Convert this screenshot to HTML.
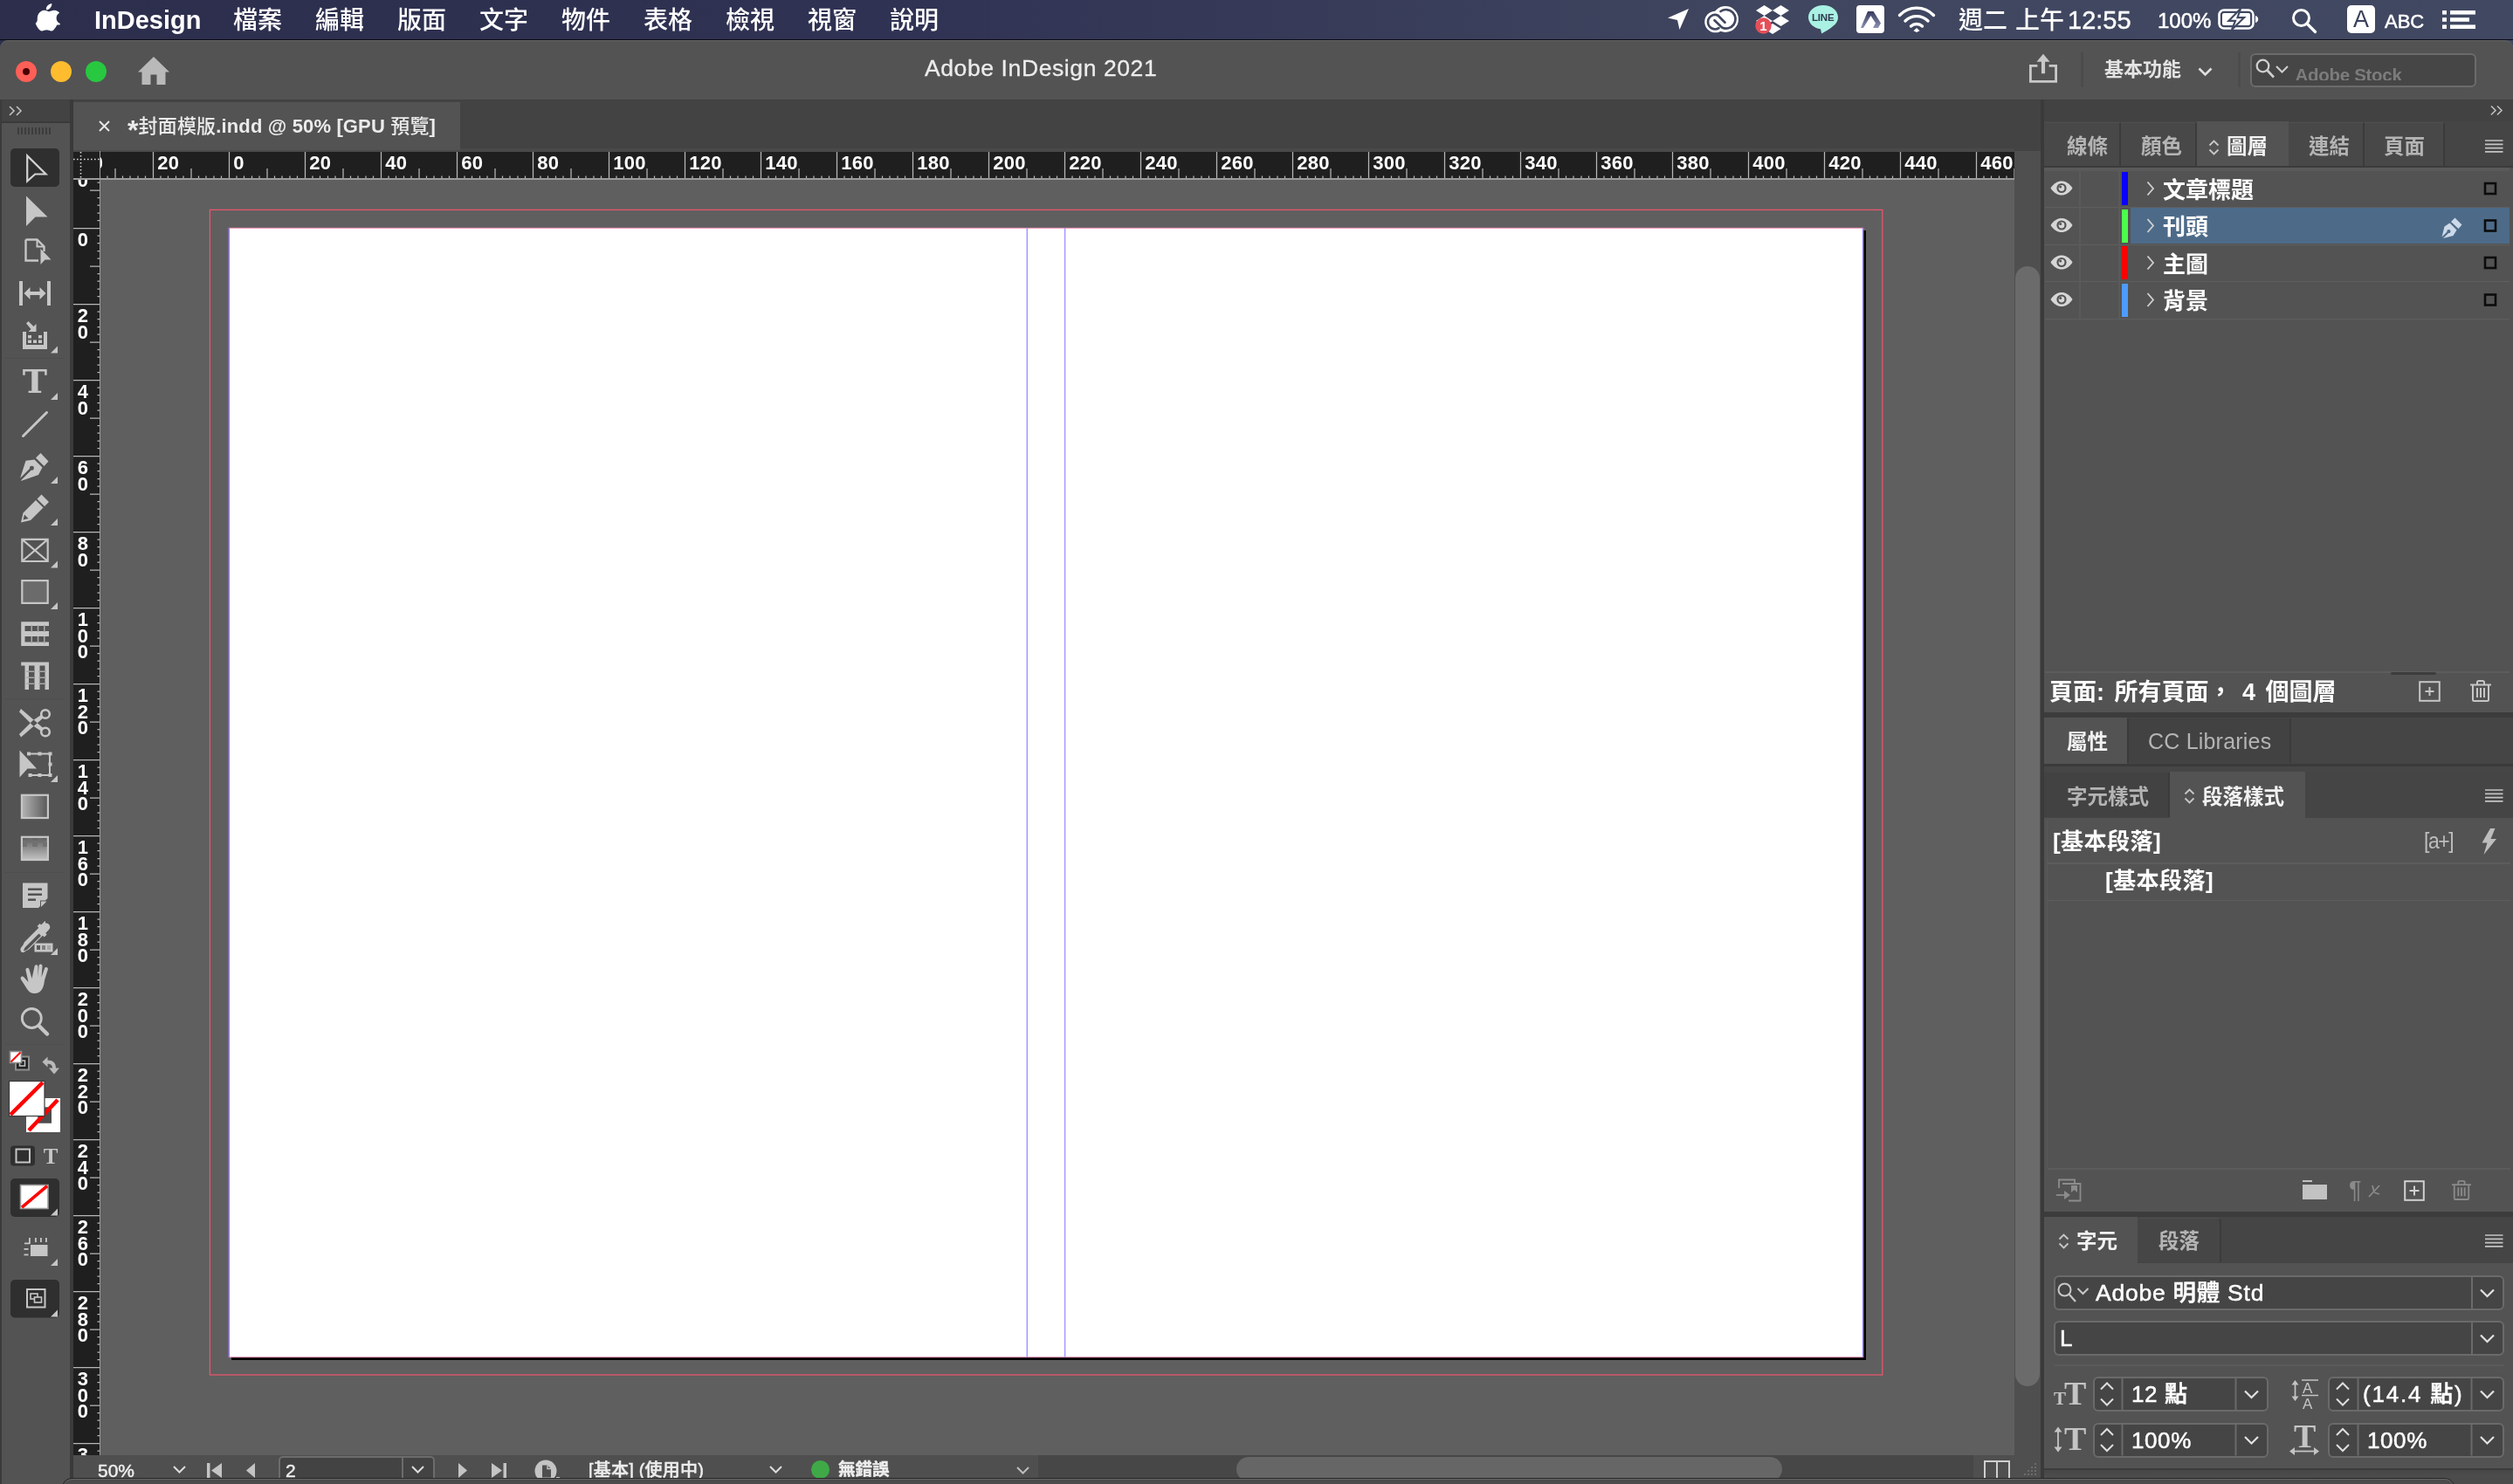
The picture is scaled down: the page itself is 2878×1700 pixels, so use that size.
<!DOCTYPE html>
<html lang="zh-Hant">
<head>
<meta charset="utf-8">
<title>Adobe InDesign 2021</title>
<style>
*{box-sizing:border-box;margin:0;padding:0}
html,body{width:2878px;height:1700px;overflow:hidden;background:#535353}
body{position:relative;font-family:"Liberation Sans","Noto Sans CJK TC",sans-serif;color:#e6e6e6;-webkit-font-smoothing:antialiased}
.a{position:absolute}
.t{position:absolute;white-space:nowrap;line-height:1}
svg{position:absolute;overflow:visible}
/* menu bar */
#menubar{left:0;top:0;width:2878px;height:60px;background:linear-gradient(90deg,#2c2e4c 0%,#303253 35%,#393e5a 58%,#40465f 70%,#414862 100%)}
#menubar .t{color:#fff;font-size:28px;top:10px;font-weight:500}
/* window */
#win{left:0;top:46px;width:2878px;height:1654px;background:#535353;border-radius:9px 9px 0 0}
</style>
</head>
<body>
<div id="root" style="position:absolute;left:0;top:0;width:2878px;height:1700px;will-change:transform">
<!-- ===== macOS menu bar ===== -->
<div id="menubar" class="a">
  <!-- apple logo -->
  <svg style="left:42px;top:4px" width="26.500" height="31.500" viewBox="0 0 170 205">
    <path fill="#fff" d="M150.4 159.8c-3.1 7.1-6.7 13.700-10.900 19.700-5.700 8.200-10.400 13.800-14 17-5.600 5.200-11.600 7.800-18 8-4.600 0-10.200-1.300-16.600-4-6.500-2.700-12.400-4-17.900-4-5.700 0-11.800 1.300-18.400 4-6.500 2.700-11.800 4.100-15.800 4.200-6.200.3-12.300-2.400-18.500-8.200-3.900-3.400-8.800-9.300-14.700-17.600-6.300-8.800-11.500-19.100-15.500-30.800C6.100 135.400 4 123.200 4 111.400c0-13.500 2.900-25.200 8.800-34.900 4.600-7.800 10.700-14 18.300-18.600 7.600-4.500 15.900-6.900 24.800-7 4.900 0 11.300 1.500 19.200 4.500 7.900 3 13 4.500 15.200 4.500 1.700 0 7.300-1.800 16.900-5.300 9.100-3.300 16.700-4.600 23-4.100 17 1.400 29.700 8.100 38.200 20.100-15.200 9.200-22.700 22.100-22.500 38.600.1 12.900 4.800 23.600 14 32.100 4.200 3.900 8.800 7 14 9.100-1.100 3.300-2.300 6.400-3.500 9.400zM111.500 4.100c0 10.100-3.700 19.500-11 28.200-8.800 10.300-19.500 16.300-31.100 15.400-.1-1.200-.2-2.500-.2-3.800 0-9.700 4.200-20 11.700-28.500 3.700-4.300 8.500-7.900 14.200-10.700C100.800 1.900 106.200.4 111.300.1c.1 1.400.2 2.700.2 4z"/>
  </svg>
  <div class="t" style="left:108px;font-weight:700;font-size:29px;top:9px">InDesign</div>
  <div class="t" style="left:267px">檔案</div>
  <div class="t" style="left:361px">編輯</div>
  <div class="t" style="left:455px">版面</div>
  <div class="t" style="left:549px">文字</div>
  <div class="t" style="left:643px">物件</div>
  <div class="t" style="left:737px">表格</div>
  <div class="t" style="left:831px">檢視</div>
  <div class="t" style="left:925px">視窗</div>
  <div class="t" style="left:1019px">說明</div>

  <!-- location arrow -->
  <svg style="left:1909px;top:9px" width="26" height="26" viewBox="0 0 26 26"><path fill="#fff" d="M25 1 L1 11.500 L12 14 L14.500 25 Z"/></svg>
  <!-- creative cloud -->
  <svg style="left:1951px;top:6px" width="41" height="32" viewBox="0 0 41 32">
    <circle cx="13.500" cy="19" r="12.300" fill="#fff"/><circle cx="25" cy="16" r="15" fill="#fff"/>
    <g fill="none" stroke="#40465f" stroke-width="2.700" stroke-linecap="round">
      <path d="M17.500 26.200a8.200 8.200 0 1 1-1-14.500l8 8"/>
      <path d="M19.500 7a10.800 10.800 0 1 1 1.500 18.500l-8.500-8.300"/>
    </g>
  </svg>
  <!-- dropbox -->
  <svg style="left:2010px;top:5px" width="40" height="35" viewBox="0 0 40 35">
    <g fill="#fff">
      <path d="M10.500 1 L20 7 L10.500 13 L1 7Z"/>
      <path d="M29.500 1 L39 7 L29.500 13 L20 7Z"/>
      <path d="M10.500 13 L20 19 L10.500 25 L1 19Z"/>
      <path d="M29.500 13 L39 19 L29.500 25 L20 19Z"/>
      <path d="M20 22 L29.500 28 L20 34 L10.500 28Z"/>
    </g>
    <circle cx="9.500" cy="24.500" r="9.200" fill="#e64f59"/>
  </svg>
  <div class="t" style="left:2013.500px;top:21.500px;font-size:15px;font-weight:700;color:#fff;width:12px;text-align:center">1</div>
  <!-- LINE -->
  <svg style="left:2070px;top:5px" width="36" height="35" viewBox="0 0 36 35">
    <path fill="#a9f1e3" d="M18 1C8.600 1 1 7.100 1 14.700c0 6.800 6 12.400 14 13.500l1.200 5.300c4.500-2.300 9.500-5.200 13.300-8.700C33 22.300 35 18.700 35 14.700 35 7.100 27.400 1 18 1z"/>
  </svg>
  <div class="t" style="left:2075px;top:15px;font-size:11.500px;font-weight:700;color:#2f3a4e;letter-spacing:-0.200px">LINE</div>
  <!-- A app icon -->
  <div class="a" style="left:2126px;top:6px;width:32px;height:32px;border-radius:4px;background:#fff"></div>
  <svg style="left:2126px;top:6px" width="32" height="32" viewBox="0 0 32 32">
    <defs><linearGradient id="ag" x1="0" y1="0" x2="0" y2="1"><stop offset="0" stop-color="#34385a"/><stop offset="1" stop-color="#8d93b5"/></linearGradient></defs>
    <path fill="url(#ag)" d="M13 7h6.500L28 20.500 25 26h-6l3-5.500L16.500 12 8 26H5z"/>
  </svg>
  <!-- wifi -->
  <svg style="left:2173px;top:7px" width="44" height="30" viewBox="0 0 44 30">
    <g fill="none" stroke="#fff" stroke-width="3.400" stroke-linecap="round">
      <path d="M2.500 10.500a27 27 0 0 1 39 0"/>
      <path d="M9 17a18.500 18.500 0 0 1 26 0"/>
      <path d="M15.500 23a9.500 9.500 0 0 1 13 0"/>
    </g>
    <path fill="#fff" d="M22 25l3.500 3.200L22 30l-3.500-1.800z"/>
  </svg>
  <div class="t" style="left:2243px">週二</div>
  <div class="t" style="left:2308px">上午</div>
  <div class="t" style="left:2368px;font-size:29px;top:9px;-webkit-text-stroke:.4px #fff">12:55</div>
  <div class="t" style="left:2471px;font-size:24px;top:12px;-webkit-text-stroke:.5px #fff">100%</div>
  <!-- battery -->
  <svg style="left:2540px;top:10px" width="47" height="24" viewBox="0 0 47 24">
    <rect x="1.500" y="1.500" width="39" height="21" rx="5.500" fill="none" stroke="#fff" stroke-width="2.600"/>
    <path d="M43 8v8c2-.5 3.200-2 3.200-4S45 8.500 43 8z" fill="#fff"/>
    <rect x="5" y="5" width="32" height="14" rx="2" fill="#fff"/>
    <path d="M26 0L12.500 13.800H20L16 24L30 10.200H22.500Z" fill="#fff" stroke="#414862" stroke-width="2.200" stroke-linejoin="miter"/>
  </svg>
  <!-- spotlight -->
  <svg style="left:2624px;top:9px" width="30" height="30" viewBox="0 0 30 30">
    <circle cx="11.500" cy="11.500" r="9" fill="none" stroke="#fff" stroke-width="3"/>
    <path d="M18 18l9.500 9.500" stroke="#fff" stroke-width="3.200" stroke-linecap="round"/>
  </svg>
  <!-- input source -->
  <div class="a" style="left:2688px;top:6px;width:32px;height:32px;border-radius:5px;background:#fff"></div>
  <div class="t" style="left:2688px;top:9px;width:32px;text-align:center;color:#3a405c;font-size:27px;font-weight:400">A</div>
  <div class="t" style="left:2731px;font-size:22px;top:13.500px;font-weight:400;-webkit-text-stroke:.5px #fff">ABC</div>
  <!-- notification centre -->
  <svg style="left:2797px;top:11.500px" width="38" height="21" viewBox="0 0 38 21">
    <g fill="#fff"><rect x="0" y="0" width="5" height="4.600"/><rect x="9" y="0" width="29" height="4.600"/>
    <rect x="0" y="8.200" width="5" height="4.600"/><rect x="9" y="8.200" width="22" height="4.600"/>
    <rect x="0" y="16.400" width="5" height="4.600"/><rect x="9" y="16.400" width="29" height="4.600"/></g>
  </svg>
</div>
<div class="a" style="left:0;top:44.800px;width:2878px;height:1.500px;background:#0a0a14"></div>
<!-- ===== application window / title bar ===== -->
<div id="win" class="a"></div>
<div class="a" style="left:0;top:46px;width:2878px;height:12px;border-radius:9px 9px 0 0;border-top:1.500px solid #646464"></div>
<!-- traffic lights -->
<div class="a" style="left:18px;top:70px;width:24px;height:24px;border-radius:50%;background:#fe5f57"></div>
<div class="a" style="left:26px;top:78px;width:8px;height:8px;border-radius:50%;background:#4a0002"></div>
<div class="a" style="left:58px;top:70px;width:24px;height:24px;border-radius:50%;background:#febc2e"></div>
<div class="a" style="left:98px;top:70px;width:24px;height:24px;border-radius:50%;background:#28c840"></div>
<!-- home -->
<svg style="left:158px;top:65px" width="36" height="32" viewBox="0 0 36 32">
  <path fill="#b9b9b9" d="M18 0L36 17.500h-4.500V32H21.500V20.500h-7V32H4.500V17.500H0z"/>
</svg>
<div class="t" style="left:1059px;top:65px;font-size:26.500px;color:#ececec;letter-spacing:.6px;-webkit-text-stroke:.3px #ececec">Adobe InDesign 2021</div>
<!-- share -->
<svg style="left:2324px;top:61px" width="32" height="34.500" viewBox="0 0 34 35">
  <path fill="none" stroke="#c8c8c8" stroke-width="3" d="M10 14.500H1.500v19h31v-19H24"/>
  <path fill="#c8c8c8" d="M17 0l8 9.500h-5.800V24h-4.400V9.500H9z"/>
</svg>
<div class="a" style="left:2383px;top:60px;width:2.500px;height:40px;background:#4c4c4c"></div>
<div class="t" style="left:2410px;top:69px;font-size:22px;font-weight:700;color:#e4e4e4">基本功能</div>
<svg style="left:2517px;top:77px" width="17" height="11" viewBox="0 0 17 11"><path d="M1.500 1.500l7 7 7-7" fill="none" stroke="#e0e0e0" stroke-width="2.600"/></svg>
<div class="a" style="left:2563px;top:60px;width:2.500px;height:40px;background:#4c4c4c"></div>
<!-- search -->
<div class="a" style="left:2576.500px;top:60.500px;width:259px;height:39px;border:2px solid #6b6b6b;border-radius:6px;background:#464646"></div>
<svg style="left:2583px;top:67px" width="23" height="23" viewBox="0 0 23 23"><circle cx="8.500" cy="8.500" r="6.800" fill="none" stroke="#cfcfcf" stroke-width="2.300"/><path d="M13.500 13.500l7.500 8" stroke="#cfcfcf" stroke-width="2.600"/></svg>
<svg style="left:2606px;top:75px" width="15" height="9" viewBox="0 0 15 9"><path d="M1 1l6.500 6.500L14 1" fill="none" stroke="#cfcfcf" stroke-width="2"/></svg>
<div class="a" style="left:2624px;top:70px;width:200px;height:21.600px;overflow:hidden"><div class="t" style="left:4.500px;top:6.200px;font-size:20.500px;font-weight:700;color:#7c7c7c;letter-spacing:-.3px">Adobe Stock</div></div>
<!-- ===== tools panel ===== -->
<div class="a" style="left:0;top:114px;width:2px;height:1586px;background:#3b3b3b"></div>
<div class="a" style="left:2px;top:114px;width:78px;height:1580px;background:#535353"></div>
<div class="a" style="left:0;top:113.500px;width:2878px;height:1.500px;background:#404040"></div>
<div class="a" style="left:2px;top:115px;width:78px;height:24px;background:#434343"></div>
<div class="a" style="left:2px;top:139px;width:78px;height:2px;background:#3a3a3a"></div>
<div class="a" style="left:79.500px;top:114px;width:4px;height:1580px;background:#3a3a3a"></div>
<svg style="left:0;top:114px" width="80" height="1580" viewBox="0 114 80 1580">
  <g fill="#c6c6c6" stroke="none">
    <!-- collapse chevrons -->
    <path d="M11 122l5 5-5 5M19 122l5 5-5 5" fill="none" stroke="#c0c0c0" stroke-width="1.600"/>
    <!-- grip -->
    <g fill="#3c3c3c"><rect x="20" y="146" width="2" height="8"/><rect x="24" y="146" width="2" height="8"/><rect x="28" y="146" width="2" height="8"/><rect x="32" y="146" width="2" height="8"/><rect x="36" y="146" width="2" height="8"/><rect x="40" y="146" width="2" height="8"/><rect x="44" y="146" width="2" height="8"/><rect x="48" y="146" width="2" height="8"/><rect x="52" y="146" width="2" height="8"/><rect x="56" y="146" width="2" height="8"/></g>
    <!-- selection tool (active) -->
    <rect x="12" y="170" width="56" height="44" rx="5" fill="#2f2f2f"/>
    <path d="M31.200 178.500V207.500L40.200 199.500H52.500Z" fill="none" stroke="#d2d2d2" stroke-width="2.200" stroke-linejoin="miter"/>
    <!-- direct selection -->
    <path d="M30 224.500V259L40.500 248.500H54.500Z"/>
    <!-- page tool -->
    <path d="M29.500 274.500H42.500L50.500 282.500V288M29.500 274.500V298.500H44" fill="none" stroke="#c6c6c6" stroke-width="2.400"/>
    <path d="M42.500 274.500V282.500H50.500" fill="none" stroke="#c6c6c6" stroke-width="2"/>
    <path d="M46.500 285V303L51.500 297.500H58.500Z"/>
    <!-- gap tool -->
    <rect x="22" y="322" width="4" height="28"/><rect x="54" y="322" width="4" height="28"/>
    <path d="M27.500 336L34.500 329V334H45.500V329L52.500 336L45.500 343V338H34.500V343Z"/>
    <!-- content collector -->
    <path d="M26 380H30V395H50V380H54V400H26Z"/>
    <rect x="32" y="384" width="4" height="3.500"/><rect x="44" y="384" width="4" height="3.500"/>
    <rect x="32" y="389.500" width="4" height="3.500"/><rect x="38" y="389.500" width="4" height="3.500"/><rect x="44" y="389.500" width="4" height="3.500"/>
    <path d="M30 370.500L32.500 368L38.500 374L41.500 371V380H32.500L35.500 377Z"/>
    <path d="M66 396.500V404.500H58Z"/>
    <rect x="6" y="410" width="68" height="1" fill="#4d4d4d"/>
    <!-- type -->
    <path d="M66 450V458H58Z"/>
    <!-- line -->
    <path d="M26.500 499.500L53.500 472.500" stroke="#c6c6c6" stroke-width="3" stroke-linecap="round"/>
    <!-- pen -->
    <path d="M46.500 519l9 9.500-5 5.500-9.500-9.500zM39.500 526.500l9 9-4.500 8.500-20 7 .8-1.500 11-11a2.400 2.400 0 1 0-1.700-1.700l-11 11 6.400-20z"/>
    <path d="M66 546V554H58Z"/>
    <!-- pencil -->
    <path d="M47.500 566.500l8.500 8.500-5 5-8.500-8.500zM41 573l8.500 8.500-14.500 14.500-11 2.500 2.500-11zM28 589.500l-1.500 6 6-1.500z" fill-rule="evenodd"/>
    <path d="M66 594V602H58Z"/>
    <!-- rectangle frame -->
    <path d="M25.300 617.800H54.700V643H25.300ZM25.300 617.800L54.700 643M54.700 617.800L25.300 643" fill="none" stroke="#c6c6c6" stroke-width="2.200"/>
    <path d="M66 642.500V650.500H58Z"/>
    <!-- rectangle -->
    <rect x="25.300" y="665.100" width="29.400" height="25.800" fill="#6b6b6b" stroke="#c6c6c6" stroke-width="2.200"/>
    <path d="M66 690V698H58Z"/>
    <!-- horizontal grid -->
    <path d="M24.200 712.300H56V717H28.500V723H56V729H28.500V735.500H56V740H24.200Z"/>
    <g fill="#a8a8a8"><rect x="35.500" y="716" width="1.500" height="8"/><rect x="42.800" y="716" width="1.500" height="8"/><rect x="50" y="716" width="1.500" height="8"/><rect x="35.500" y="729" width="1.500" height="8"/><rect x="42.800" y="729" width="1.500" height="8"/><rect x="50" y="729" width="1.500" height="8"/></g>
    <!-- vertical grid -->
    <path d="M24.200 758.400H56V790H51.500V762.500H45.500V790H39.500V762.500H33V790H28.500V762.500H24.200Z"/>
    <g fill="#a8a8a8"><rect x="30" y="768.500" width="9" height="1.500"/><rect x="30" y="775.500" width="9" height="1.500"/><rect x="30" y="782.500" width="9" height="1.500"/><rect x="44" y="768.500" width="9" height="1.500"/><rect x="44" y="775.500" width="9" height="1.500"/><rect x="44" y="782.500" width="9" height="1.500"/></g>
    <rect x="6" y="800" width="68" height="1" fill="#4d4d4d"/>
    <!-- scissors -->
    <g fill="none" stroke="#c6c6c6" stroke-width="2.600"><circle cx="52" cy="818" r="4.800"/><circle cx="52" cy="838.500" r="4.800"/></g>
    <path d="M22 815.500L24 812L50 834.500L47 837.500L38 831.500ZM22 841L24 844.500L50 822L47 819L38 825Z"/>
    <!-- free transform -->
    <path d="M22.500 859.500V890.500L31.500 880.500H42Z"/>
    <path d="M33 863.500H57V888H35" fill="none" stroke="#c6c6c6" stroke-width="2"/>
    <g><rect x="31" y="861.500" width="4" height="4"/><rect x="43.500" y="861.500" width="4" height="4"/><rect x="55.500" y="861.500" width="4" height="4"/><rect x="55.500" y="873.500" width="4" height="4"/><rect x="55.500" y="886" width="4" height="4"/><rect x="43.500" y="886" width="4" height="4"/><rect x="32.500" y="886" width="4" height="4"/></g>
    <path d="M66 888V896H58Z"/>
  </g>
  <defs>
    <linearGradient id="gsw" x1="0" y1="0" x2="1" y2="0"><stop offset="0" stop-color="#b4b4b4"/><stop offset="1" stop-color="#585858"/></linearGradient>
    <linearGradient id="gfe" x1="0" y1="0" x2="0" y2="1"><stop offset="0" stop-color="#5c5c5c"/><stop offset=".45" stop-color="#8a8a8a"/><stop offset="1" stop-color="#c2c2c2"/></linearGradient>
  </defs>
  <g fill="#c6c6c6">
    <rect x="24.900" y="910.800" width="30" height="26.200" fill="url(#gsw)" stroke="#c6c6c6" stroke-width="2.200"/>
    <rect x="24.900" y="958.800" width="30" height="26.200" fill="url(#gfe)" stroke="#c6c6c6" stroke-width="2.200"/>
    <g fill="#6e6e6e" opacity=".8"><rect x="31" y="960" width="6" height="5"/><rect x="43" y="960" width="6" height="5"/><rect x="37" y="965" width="6" height="5"/><rect x="49" y="965" width="5" height="5"/><rect x="26" y="965" width="5" height="5"/></g>
    <rect x="6" y="999" width="68" height="1" fill="#4d4d4d"/>
    <!-- note -->
    <path d="M26 1011.500H54.500V1029L44 1040H26Z"/>
    <path d="M46 1031.500H54L46 1039.500Z" fill="#535353"/>
    <path d="M47 1032.500H53.500L47 1039Z" fill="#c6c6c6"/>
    <g fill="#4e4e4e"><rect x="32" y="1017.500" width="16" height="2.400"/><rect x="32" y="1023.500" width="16" height="2.400"/><rect x="32" y="1029.500" width="9" height="2.400"/></g>
    <!-- eyedropper -->
    <path d="M52 1057.500a4.500 4.500 0 0 1 4 7.500l-3.800 4 1.500 1.500-3 3-1.800-1.800-15.500 15.500c-2 2-3 1-5 3s-5 .5-5-2.500c0-2 1-2.500 2.500-4.500s1-3 3-5l15.500-15.500-1.800-1.800 3-3 1.500 1.500 4-3.800a4.500 4.500 0 0 1 .9-.6zM44.500 1069.500l-15.500 15.500c-1.200 1.200-.8 2.200-2 3.800l.7.700c1.600-1.200 2.600-.8 3.800-2l15.500-15.500z" fill-rule="evenodd"/>
    <path d="M39.500 1080.500H60.500V1090.500H39.500ZM42 1083V1088H46V1083ZM48 1083V1088H52V1083ZM54 1083V1088H58V1083Z" fill-rule="evenodd"/>
    <g fill="#8c8c8c"><rect x="42" y="1083" width="4" height="5" fill="#5a5a5a"/><rect x="48" y="1083" width="4" height="5" fill="#808080"/><rect x="54" y="1083" width="4" height="5" fill="#a6a6a6"/></g>
    <path d="M66 1086V1094H58Z"/>
    <!-- hand -->
    <path transform="translate(3 0)" d="M36.500 1107.500c0-3 4-3 4 0v11.500l1-12.500c.3-3 4.300-2.600 4 .4l-1 12.600 3.500-10c1-2.800 4.700-1.500 3.800 1.300l-3.800 12.200c-.5 3.500-1 7.500-3 10.500s-5 4.500-8.500 4.500c-4 0-6.500-2-8.500-5l-7-11c-1.500-2.500 1.500-4.800 3.500-2.500l5 5.500-3-13.500c-.6-3 3.200-3.900 4-1l3 10.500z"/>
    <!-- zoom -->
    <circle cx="36.300" cy="1166.500" r="11" fill="none" stroke="#c6c6c6" stroke-width="2.800"/>
    <path d="M44.500 1175l9.500 9.500" stroke="#c6c6c6" stroke-width="4.500" stroke-linecap="round"/>
    <rect x="6" y="1196" width="68" height="1" fill="#4d4d4d"/>
    <!-- default fill & stroke -->
    <rect x="18" y="1210.500" width="15" height="15" fill="#222" stroke="#8e8e8e" stroke-width="2"/>
    <rect x="22.500" y="1215" width="6" height="6" fill="#222" stroke="#c6c6c6" stroke-width="1.500"/>
    <rect x="11.500" y="1204.500" width="13" height="13" fill="#fff" stroke="#8e8e8e" stroke-width="1.600"/>
    <path d="M12.500 1216.500l11-11" stroke="#f00" stroke-width="2"/>
    <!-- swap -->
    <path d="M48.500 1216.500l6-6v4c6 0 9.500 3 9.500 9h4l-6 7-6-7h4c0-3-1.500-4.800-5.500-4.800v3.800z" fill="#b9b9b9"/>
    <!-- stroke box -->
    <path d="M30 1258H69V1297H30ZM43.500 1268.500V1286.500H59V1268.500Z" fill="#fff" fill-rule="evenodd"/>
    <rect x="43.500" y="1268.500" width="15.500" height="18" fill="#4d4d4d"/>
    <path d="M33 1295l33-35" stroke="#f00" stroke-width="4.500"/>
    <!-- fill box -->
    <rect x="10.500" y="1238.500" width="40.500" height="40" fill="#fff" stroke="#3a3a3a" stroke-width="1.200"/>
    <path d="M12 1277l37-37" stroke="#f00" stroke-width="4.500"/>
    <!-- formatting affects -->
    <rect x="12" y="1312.500" width="28" height="23" rx="4" fill="#2f2f2f"/>
    <rect x="18.500" y="1316.500" width="15.500" height="15" fill="none" stroke="#c6c6c6" stroke-width="2"/>
    <!-- apply none -->
    <rect x="12" y="1350" width="56" height="44" rx="5" fill="#2f2f2f"/>
    <rect x="23.500" y="1357.500" width="31.500" height="27" fill="#fff" stroke="#9a9a9a" stroke-width="1.600"/>
    <path d="M25 1383l29-24.500" stroke="#f00" stroke-width="3.600"/>
    <path d="M66 1384.500V1392.500H58Z"/>
    <!-- view options -->
    <rect x="35" y="1426" width="19.500" height="13" fill="#c6c6c6"/>
    <g fill="#c6c6c6"><rect x="28" y="1423.500" width="6" height="1.800"/><rect x="33" y="1418" width="1.800" height="7"/><rect x="40" y="1418" width="1.800" height="5"/><rect x="46" y="1418" width="1.800" height="5"/><rect x="52" y="1418" width="1.800" height="5"/><rect x="27.500" y="1430" width="5" height="1.800"/><rect x="27.500" y="1436.500" width="5" height="1.800"/></g>
    <path d="M66 1442V1450H58Z"/>
    <!-- screen mode -->
    <rect x="12" y="1466" width="56" height="43.500" rx="5" fill="#2f2f2f"/>
    <rect x="31" y="1477" width="20.500" height="20.500" fill="none" stroke="#c6c6c6" stroke-width="2"/>
    <rect x="35" y="1482" width="8" height="6" fill="none" stroke="#c6c6c6" stroke-width="1.600"/>
    <rect x="39.500" y="1486" width="8" height="6" fill="#2f2f2f" stroke="#c6c6c6" stroke-width="1.600"/>
    <path d="M66 1500.500V1508.500H58Z"/>
  </g>
</svg>
<div class="t" style="left:20px;top:418px;width:40px;text-align:center;font-family:'DejaVu Serif','Liberation Serif',serif;font-weight:700;font-size:38px;color:#c6c6c6">T</div>
<div class="t" style="left:49px;top:1312px;font-family:'Liberation Serif',serif;font-weight:700;font-size:25px;color:#c6c6c6;width:18px;text-align:center">T</div>
<!-- ===== document window ===== -->
<style>
#hr .t,#vr .t{color:#fff;font-size:22px;font-weight:700;letter-spacing:.3px}
#vr .t{line-height:18.200px;white-space:pre;width:14px;text-align:center}
#status .t{font-size:20px;color:#ededed;font-weight:500;-webkit-text-stroke:.45px #ededed}
</style>
<div class="a" style="left:84px;top:115px;width:2253px;height:58px;background:#434343"></div>
<!-- active document tab -->
<div class="a" style="left:84px;top:117px;width:443px;height:56px;background:#535353"></div>
<svg style="left:113px;top:138px" width="13" height="13" viewBox="0 0 13 13"><path d="M1 1l11 11M12 1L1 12" stroke="#e6e6e6" stroke-width="2"/></svg>
<div class="t" style="left:146px;top:134px;font-size:22px;font-weight:500;color:#ebebeb;letter-spacing:.15px"><span style="position:relative;top:8px;font-size:32px;line-height:0;font-weight:700">*</span>封面模版<b>.indd @ 50% [GPU </b>預覽<b>]</b></div>

<!-- pasteboard -->
<div class="a" style="left:115px;top:205px;width:2192px;height:1462px;background:#5f5f5f;overflow:hidden">
  <!-- shadow + page -->
  <div class="a" style="left:150px;top:59px;width:1872px;height:1294px;background:#000"></div>
  <div class="a" style="left:147px;top:56px;width:1872px;height:1294px;background:#fff"></div>
  <svg style="left:0;top:0" width="2192" height="1462" viewBox="0 0 2192 1462">
    <!-- bleed -->
    <rect x="125.400" y="35.400" width="1915.400" height="1334.600" fill="none" stroke="#e6566c" stroke-width="1.300"/>
    <!-- page edge (magenta/violet margin + edge lines) -->
    <rect x="147.300" y="56.300" width="1871.400" height="1293.400" fill="none" stroke="#f08ab0" stroke-width="1"/>
    <path d="M147.400 56V1350M2018.600 56V1350" stroke="#8f7dff" stroke-width="1.400"/>
    <!-- spine guides -->
    <path d="M1061.300 56V1350M1104.600 56V1350" stroke="#a399ff" stroke-width="1.500"/>
  </svg>
</div>

<!-- rulers -->
<div class="a" style="left:84px;top:169.500px;width:2223px;height:4.500px;background:#494949"></div>
<div class="a" style="left:84px;top:169px;width:443px;height:3px;background:#535353"></div>
<div class="a" style="left:84px;top:174px;width:31px;height:31.500px;background:#1f1f1f"></div>
<svg style="left:84px;top:173.500px" width="31" height="32" viewBox="0 0 31 32"><path d="M0 8.500H31M8.500 0V32" stroke="#d8d8d8" stroke-width="1.600" stroke-dasharray="1.600 2.400" fill="none"/></svg>
<div id="hr" class="a" style="left:115px;top:174px;width:2192px;height:31.500px;background:#1f1f1f;overflow:hidden">
<svg style="left:0;top:-1px" width="2192" height="32" viewBox="0 0 2192 32"><path d="M-0.5 28.5 V32M8 28.5 V32M17 20 V32M25.5 28.5 V32M34 28.5 V32M43 28.5 V32M51.5 28.5 V32M60.5 0 V32M69 28.5 V32M77.5 28.5 V32M86.5 28.5 V32M95 28.5 V32M104 20 V32M112.5 28.5 V32M121 28.5 V32M130 28.5 V32M138.5 28.5 V32M147.5 0 V32M156 28.5 V32M164.5 28.5 V32M173.5 28.5 V32M182 28.5 V32M191 20 V32M199.5 28.5 V32M208 28.5 V32M217 28.5 V32M225.5 28.5 V32M234.5 0 V32M243 28.5 V32M251.5 28.5 V32M260.5 28.5 V32M269 28.5 V32M278 20 V32M286.5 28.5 V32M295 28.5 V32M304 28.5 V32M312.5 28.5 V32M321.5 0 V32M330 28.5 V32M338.5 28.5 V32M347.5 28.5 V32M356 28.5 V32M365 20 V32M373.5 28.5 V32M382 28.5 V32M391 28.5 V32M399.5 28.5 V32M408.5 0 V32M417 28.5 V32M425.5 28.5 V32M434.5 28.5 V32M443 28.5 V32M452 20 V32M460.5 28.5 V32M469 28.5 V32M478 28.5 V32M486.5 28.5 V32M495.5 0 V32M504 28.5 V32M512.5 28.5 V32M521.5 28.5 V32M530 28.5 V32M539 20 V32M547.5 28.5 V32M556 28.5 V32M565 28.5 V32M573.5 28.5 V32M582.5 0 V32M591 28.5 V32M599.5 28.5 V32M608.5 28.5 V32M617 28.5 V32M626 20 V32M634.5 28.5 V32M643 28.5 V32M652 28.5 V32M660.5 28.5 V32M669.5 0 V32M678 28.5 V32M686.5 28.5 V32M695.5 28.5 V32M704 28.5 V32M713 20 V32M721.5 28.5 V32M730 28.5 V32M739 28.5 V32M747.5 28.5 V32M756.5 0 V32M765 28.5 V32M773.5 28.5 V32M782.5 28.5 V32M791 28.5 V32M800 20 V32M808.5 28.5 V32M817 28.5 V32M826 28.5 V32M834.5 28.5 V32M843.5 0 V32M852 28.5 V32M860.5 28.5 V32M869.5 28.5 V32M878 28.5 V32M887 20 V32M895.5 28.5 V32M904 28.5 V32M913 28.5 V32M921.5 28.5 V32M930.5 0 V32M939 28.5 V32M947.5 28.5 V32M956.5 28.5 V32M965 28.5 V32M974 20 V32M982.5 28.5 V32M991 28.5 V32M1000 28.5 V32M1008.5 28.5 V32M1017.5 0 V32M1026 28.5 V32M1034.5 28.5 V32M1043.5 28.5 V32M1052 28.5 V32M1061 20 V32M1069.5 28.5 V32M1078 28.5 V32M1087 28.5 V32M1095.5 28.5 V32M1104.5 0 V32M1113 28.5 V32M1121.5 28.5 V32M1130.5 28.5 V32M1139 28.5 V32M1148 20 V32M1156.5 28.5 V32M1165 28.5 V32M1174 28.5 V32M1182.5 28.5 V32M1191.5 0 V32M1200 28.5 V32M1208.5 28.5 V32M1217.5 28.5 V32M1226 28.5 V32M1235 20 V32M1243.5 28.5 V32M1252 28.5 V32M1261 28.5 V32M1269.5 28.5 V32M1278.5 0 V32M1287 28.5 V32M1295.5 28.5 V32M1304.5 28.5 V32M1313 28.5 V32M1322 20 V32M1330.5 28.5 V32M1339 28.5 V32M1348 28.5 V32M1356.5 28.5 V32M1365.5 0 V32M1374 28.5 V32M1382.5 28.5 V32M1391.5 28.5 V32M1400 28.5 V32M1409 20 V32M1417.5 28.5 V32M1426 28.5 V32M1435 28.5 V32M1443.5 28.5 V32M1452.5 0 V32M1461 28.5 V32M1469.5 28.5 V32M1478.5 28.5 V32M1487 28.5 V32M1496 20 V32M1504.5 28.5 V32M1513 28.5 V32M1522 28.5 V32M1530.5 28.5 V32M1539.5 0 V32M1548 28.5 V32M1556.5 28.5 V32M1565.5 28.5 V32M1574 28.5 V32M1583 20 V32M1591.5 28.5 V32M1600 28.5 V32M1609 28.5 V32M1617.5 28.5 V32M1626.5 0 V32M1635 28.5 V32M1643.5 28.5 V32M1652.5 28.5 V32M1661 28.5 V32M1670 20 V32M1678.5 28.5 V32M1687 28.5 V32M1696 28.5 V32M1704.5 28.5 V32M1713.5 0 V32M1722 28.5 V32M1730.5 28.5 V32M1739.5 28.5 V32M1748 28.5 V32M1757 20 V32M1765.5 28.5 V32M1774 28.5 V32M1783 28.5 V32M1791.5 28.5 V32M1800.5 0 V32M1809 28.5 V32M1817.5 28.5 V32M1826.5 28.5 V32M1835 28.5 V32M1844 20 V32M1852.5 28.5 V32M1861 28.5 V32M1870 28.5 V32M1878.5 28.5 V32M1887.5 0 V32M1896 28.5 V32M1904.5 28.5 V32M1913.5 28.5 V32M1922 28.5 V32M1931 20 V32M1939.5 28.5 V32M1948 28.5 V32M1957 28.5 V32M1965.5 28.5 V32M1974.5 0 V32M1983 28.5 V32M1991.5 28.5 V32M2000.5 28.5 V32M2009 28.5 V32M2018 20 V32M2026.5 28.5 V32M2035 28.5 V32M2044 28.5 V32M2052.5 28.5 V32M2061.5 0 V32M2070 28.5 V32M2078.5 28.5 V32M2087.5 28.5 V32M2096 28.5 V32M2105 20 V32M2113.5 28.5 V32M2122 28.5 V32M2131 28.5 V32M2139.5 28.5 V32M2148.5 0 V32M2157 28.5 V32M2165.5 28.5 V32M2174.5 28.5 V32M2183 28.5 V32M2192 20 V32" stroke="#b8b8b8" stroke-width="1.250" fill="none"/></svg>
<div class="t" style="left:-21.7px;top:1.500px">40</div>
<div class="t" style="left:65.3px;top:1.500px">20</div>
<div class="t" style="left:152.3px;top:1.500px">0</div>
<div class="t" style="left:239.3px;top:1.500px">20</div>
<div class="t" style="left:326.3px;top:1.500px">40</div>
<div class="t" style="left:413.3px;top:1.500px">60</div>
<div class="t" style="left:500.3px;top:1.500px">80</div>
<div class="t" style="left:587.3px;top:1.500px">100</div>
<div class="t" style="left:674.3px;top:1.500px">120</div>
<div class="t" style="left:761.3px;top:1.500px">140</div>
<div class="t" style="left:848.3px;top:1.500px">160</div>
<div class="t" style="left:935.3px;top:1.500px">180</div>
<div class="t" style="left:1022.3px;top:1.500px">200</div>
<div class="t" style="left:1109.3px;top:1.500px">220</div>
<div class="t" style="left:1196.3px;top:1.500px">240</div>
<div class="t" style="left:1283.3px;top:1.500px">260</div>
<div class="t" style="left:1370.3px;top:1.500px">280</div>
<div class="t" style="left:1457.3px;top:1.500px">300</div>
<div class="t" style="left:1544.3px;top:1.500px">320</div>
<div class="t" style="left:1631.3px;top:1.500px">340</div>
<div class="t" style="left:1718.3px;top:1.500px">360</div>
<div class="t" style="left:1805.3px;top:1.500px">380</div>
<div class="t" style="left:1892.3px;top:1.500px">400</div>
<div class="t" style="left:1979.3px;top:1.500px">420</div>
<div class="t" style="left:2066.3px;top:1.500px">440</div>
<div class="t" style="left:2153.3px;top:1.500px">460</div>
</div>
<div id="vr" class="a" style="left:84px;top:205px;width:31px;height:1462px;background:#1f1f1f;overflow:hidden">
<svg style="left:0;top:0" width="31" height="1462" viewBox="0 0 31 1462"><path d="M27.5 4 H31M19 13 H31M27.5 21.5 H31M27.5 30 H31M27.5 39 H31M27.5 47.5 H31M0 56.5 H31M27.5 65 H31M27.5 73.5 H31M27.5 82.5 H31M27.5 91 H31M19 100 H31M27.5 108.5 H31M27.5 117 H31M27.5 126 H31M27.5 134.5 H31M0 143.5 H31M27.5 152 H31M27.5 160.5 H31M27.5 169.5 H31M27.5 178 H31M19 187 H31M27.5 195.5 H31M27.5 204 H31M27.5 213 H31M27.5 221.5 H31M0 230.5 H31M27.5 239 H31M27.5 247.5 H31M27.5 256.5 H31M27.5 265 H31M19 274 H31M27.5 282.5 H31M27.5 291 H31M27.5 300 H31M27.5 308.5 H31M0 317.5 H31M27.5 326 H31M27.5 334.5 H31M27.5 343.5 H31M27.5 352 H31M19 361 H31M27.5 369.5 H31M27.5 378 H31M27.5 387 H31M27.5 395.5 H31M0 404.5 H31M27.5 413 H31M27.5 421.5 H31M27.5 430.5 H31M27.5 439 H31M19 448 H31M27.5 456.5 H31M27.5 465 H31M27.5 474 H31M27.5 482.5 H31M0 491.5 H31M27.5 500 H31M27.5 508.5 H31M27.5 517.5 H31M27.5 526 H31M19 535 H31M27.5 543.5 H31M27.5 552 H31M27.5 561 H31M27.5 569.5 H31M0 578.5 H31M27.5 587 H31M27.5 595.5 H31M27.5 604.5 H31M27.5 613 H31M19 622 H31M27.5 630.5 H31M27.5 639 H31M27.5 648 H31M27.5 656.5 H31M0 665.5 H31M27.5 674 H31M27.5 682.5 H31M27.5 691.5 H31M27.5 700 H31M19 709 H31M27.5 717.5 H31M27.5 726 H31M27.5 735 H31M27.5 743.5 H31M0 752.5 H31M27.5 761 H31M27.5 769.5 H31M27.5 778.5 H31M27.5 787 H31M19 796 H31M27.5 804.5 H31M27.5 813 H31M27.5 822 H31M27.5 830.5 H31M0 839.5 H31M27.5 848 H31M27.5 856.5 H31M27.5 865.5 H31M27.5 874 H31M19 883 H31M27.5 891.5 H31M27.5 900 H31M27.5 909 H31M27.5 917.5 H31M0 926.5 H31M27.5 935 H31M27.5 943.5 H31M27.5 952.5 H31M27.5 961 H31M19 970 H31M27.5 978.5 H31M27.5 987 H31M27.5 996 H31M27.5 1004.5 H31M0 1013.5 H31M27.5 1022 H31M27.5 1030.5 H31M27.5 1039.5 H31M27.5 1048 H31M19 1057 H31M27.5 1065.5 H31M27.5 1074 H31M27.5 1083 H31M27.5 1091.5 H31M0 1100.5 H31M27.5 1109 H31M27.5 1117.5 H31M27.5 1126.5 H31M27.5 1135 H31M19 1144 H31M27.5 1152.5 H31M27.5 1161 H31M27.5 1170 H31M27.5 1178.5 H31M0 1187.5 H31M27.5 1196 H31M27.5 1204.5 H31M27.5 1213.5 H31M27.5 1222 H31M19 1231 H31M27.5 1239.5 H31M27.5 1248 H31M27.5 1257 H31M27.5 1265.5 H31M0 1274.5 H31M27.5 1283 H31M27.5 1291.5 H31M27.5 1300.5 H31M27.5 1309 H31M19 1318 H31M27.5 1326.5 H31M27.5 1335 H31M27.5 1344 H31M27.5 1352.5 H31M0 1361.5 H31M27.5 1370 H31M27.5 1378.5 H31M27.5 1387.5 H31M27.5 1396 H31M19 1405 H31M27.5 1413.5 H31M27.5 1422 H31M27.5 1431 H31M27.5 1439.5 H31M0 1448.5 H31M27.5 1457 H31" stroke="#b8b8b8" stroke-width="1.250" fill="none"/></svg>
<div class="t" style="left:4px;top:-25.7px">2
0</div>
<div class="t" style="left:4px;top:61.3px">0</div>
<div class="t" style="left:4px;top:148.3px">2
0</div>
<div class="t" style="left:4px;top:235.3px">4
0</div>
<div class="t" style="left:4px;top:322.3px">6
0</div>
<div class="t" style="left:4px;top:409.3px">8
0</div>
<div class="t" style="left:4px;top:496.3px">1
0
0</div>
<div class="t" style="left:4px;top:583.3px">1
2
0</div>
<div class="t" style="left:4px;top:670.3px">1
4
0</div>
<div class="t" style="left:4px;top:757.3px">1
6
0</div>
<div class="t" style="left:4px;top:844.3px">1
8
0</div>
<div class="t" style="left:4px;top:931.3px">2
0
0</div>
<div class="t" style="left:4px;top:1018.3px">2
2
0</div>
<div class="t" style="left:4px;top:1105.3px">2
4
0</div>
<div class="t" style="left:4px;top:1192.3px">2
6
0</div>
<div class="t" style="left:4px;top:1279.3px">2
8
0</div>
<div class="t" style="left:4px;top:1366.3px">3
0
0</div>
<div class="t" style="left:4px;top:1453.3px">3
2
0</div>
</div>
<div class="a" style="left:84px;top:204.300px;width:2223px;height:1.400px;background:#9c9c9c"></div>
<div class="a" style="left:113.800px;top:173px;width:1.400px;height:1494px;background:#9c9c9c"></div>

<!-- vertical scrollbar -->
<div class="a" style="left:2307px;top:173px;width:30px;height:1494px;background:#4f4f4f"></div>
<div class="a" style="left:2308px;top:305px;width:28px;height:1283px;border-radius:14px;background:#6b6b6b"></div>
<div class="a" style="left:2337px;top:114px;width:4px;height:1580px;background:#3a3a3a"></div>

<!-- status bar -->
<div id="status" class="a" style="left:84px;top:1667px;width:2253px;height:27px;background:#474747;overflow:hidden">
  <div class="a" style="left:0;top:0;width:1105px;height:27px;background:#4f4f4f"></div>
  <div class="a" style="left:2176px;top:0;width:77px;height:27px;background:#4f4f4f"></div>
  <div class="t" style="left:28px;top:7px;font-size:21px">50%</div>
  <svg style="left:114px;top:12px" width="15" height="9" viewBox="0 0 15 9"><path d="M1 1l6.500 6.500L14 1" fill="none" stroke="#dcdcdc" stroke-width="2"/></svg>
  <svg style="left:153px;top:9px" width="18" height="17" viewBox="0 0 18 17"><path d="M0 0h3.500v17H0zM17 0v17L5 8.500z" fill="#c4c4c4"/></svg>
  <svg style="left:198px;top:9px" width="10" height="17" viewBox="0 0 10 17"><path d="M10 0v17L0 8.500z" fill="#c4c4c4"/></svg>
  <div class="a" style="left:235px;top:1px;width:179px;height:34px;border:2px solid #6c6c6c;border-radius:5px;background:#434343"></div>
  <div class="a" style="left:376px;top:3px;width:2px;height:30px;background:#6c6c6c"></div>
  <div class="t" style="left:243px;top:7px;font-size:21px">2</div>
  <svg style="left:387px;top:12px" width="15" height="9" viewBox="0 0 15 9"><path d="M1 1l6.500 6.500L14 1" fill="none" stroke="#dcdcdc" stroke-width="2"/></svg>
  <svg style="left:441px;top:9px" width="10" height="17" viewBox="0 0 10 17"><path d="M0 0v17l10-8.500z" fill="#c4c4c4"/></svg>
  <svg style="left:478px;top:9px" width="18" height="17" viewBox="0 0 18 17"><path d="M14.500 0H18v17h-3.500zM1 0v17l12-8.500z" fill="#c4c4c4"/></svg>
  <!-- preflight profile icon -->
  <svg style="left:528px;top:5px" width="30" height="26" viewBox="0 0 30 26"><circle cx="13" cy="13" r="12.500" fill="#c4c4c4"/><path d="M9 6.500h6l4 4v10H9z" fill="#4f4f4f"/><path d="M15 6.500v4h4" fill="none" stroke="#c4c4c4" stroke-width="1.400"/><rect x="25" y="20" width="4" height="1.500" fill="#c4c4c4"/></svg>
  <div class="t" style="left:590px;top:7px;font-size:20px;letter-spacing:.2px">[基本] (使用中)</div>
  <svg style="left:797px;top:12px" width="15" height="9" viewBox="0 0 15 9"><path d="M1 1l6.500 6.500L14 1" fill="none" stroke="#dcdcdc" stroke-width="2"/></svg>
  <div class="a" style="left:845px;top:5.500px;width:21px;height:21px;border-radius:50%;background:#3fa947"></div>
  <div class="t" style="left:876px;top:7px;font-size:19.500px;font-weight:700">無錯誤</div>
  <svg style="left:1080px;top:13px" width="15" height="9" viewBox="0 0 15 9"><path d="M1 1l6.500 6.500L14 1" fill="none" stroke="#bdbdbd" stroke-width="2"/></svg>
  <!-- horizontal scroll thumb -->
  <div class="a" style="left:1332px;top:2px;width:625px;height:28px;border-radius:14px;background:#666"></div>
  <svg style="left:2234px;top:9px" width="16" height="16" viewBox="0 0 16 16"><g fill="#6c6c6c"><rect x="12" y="0" width="2" height="2"/><rect x="8" y="4" width="2" height="2"/><rect x="12" y="4" width="2" height="2"/><rect x="4" y="8" width="2" height="2"/><rect x="8" y="8" width="2" height="2"/><rect x="12" y="8" width="2" height="2"/><rect x="0" y="12" width="2" height="2"/><rect x="4" y="12" width="2" height="2"/><rect x="8" y="12" width="2" height="2"/><rect x="12" y="12" width="2" height="2"/></g></svg>
  <!-- split layout icon -->
  <svg style="left:2188px;top:6px" width="30" height="24" viewBox="0 0 30 24"><path d="M1 24V1h28v23M15 1v23" fill="none" stroke="#cfcfcf" stroke-width="2"/></svg>
</div>
<!-- ===== right panel dock ===== -->
<style>
.tabrow{position:absolute;left:2341px;width:537px;background:#454545}
.tab{position:absolute;top:1px;height:51px;background:#484848;border-right:2px solid #3b3b3b;border-top:1px solid #505050}
.tab.on{top:0;height:53px;background:#535353;border:none}
.tabt{position:absolute;white-space:nowrap;line-height:1;font-size:23.500px;font-weight:700;color:#b4b4b4}
.tabt.on{color:#f2f2f2;font-weight:700}
.ln{position:absolute;background:#5e5e5e}
.lname{position:absolute;margin-top:1.800px;white-space:nowrap;line-height:1;font-size:26px;font-weight:700;color:#fff;left:2477px}
.fld{position:absolute;border:2px solid #6a6a6a;border-radius:6px;background:#454545}
.fldt{position:absolute;white-space:nowrap;line-height:1;font-size:26px;font-weight:500;color:#fff;letter-spacing:.6px;-webkit-text-stroke:.5px #fff}
</style>
<div class="a" style="left:2341px;top:115px;width:537px;height:1579px;background:#535353"></div>
<div class="a" style="left:2341px;top:115px;width:537px;height:24px;background:#424242"></div>
<svg style="left:2852px;top:121px" width="14" height="11" viewBox="0 0 14 11"><path d="M1 .5l5 5-5 5M8 .5l5 5-5 5" fill="none" stroke="#c0c0c0" stroke-width="1.600"/></svg>

<!-- tab row 1 -->
<div class="tabrow" style="top:139px;height:51px">
  <div class="tab" style="left:0;width:88px"></div>
  <div class="tab" style="left:88px;width:87px"></div>
  <div class="tab on" style="left:175px;width:105px"></div>
  <div class="tab" style="left:280px;width:87px"></div>
  <div class="tab" style="left:367px;width:92px"></div>
</div>
<div class="tabt" style="left:2367px;top:157px">線條</div>
<div class="tabt" style="left:2452px;top:157px">顏色</div>
<svg style="left:2529px;top:159px" width="13" height="20" viewBox="0 0 13 20"><path d="M1.500 7.500l5-5 5 5M1.500 12.500l5 5 5-5" fill="none" stroke="#c8c8c8" stroke-width="1.800"/></svg>
<div class="tabt on" style="left:2550px;top:157px">圖層</div>
<div class="tabt" style="left:2644px;top:157px">連結</div>
<div class="tabt" style="left:2730px;top:157px">頁面</div>
<svg style="left:2846px;top:160px" width="20.500" height="15" viewBox="0 0 22 15" preserveAspectRatio="none"><path d="M0 1h22M0 5.300h22M0 9.600h22M0 13.900h22" stroke="#c4c4c4" stroke-width="1.700"/></svg>

<!-- layers list -->
<div class="a" style="left:2440px;top:238px;width:434px;height:41px;background:#4d6b89"></div>
<div class="a" style="left:2341px;top:190px;width:537px;height:1.500px;background:#3b3b3b"></div>
<div class="ln" style="left:2341px;top:191.500px;width:533px;height:4px;background:#5a5a5a"></div>
<div class="ln" style="left:2342px;top:237px;width:532px;height:1px"></div>
<div class="ln" style="left:2342px;top:279.500px;width:532px;height:1px"></div>
<div class="ln" style="left:2342px;top:322px;width:532px;height:1px"></div>
<div class="ln" style="left:2342px;top:364.500px;width:532px;height:1px"></div>
<div class="ln" style="left:2381px;top:195px;width:1.500px;height:170px;background:#5a5a5a"></div>
<div class="ln" style="left:2426px;top:195px;width:1.500px;height:170px;background:#5a5a5a"></div>
<div class="a" style="left:2430px;top:197px;width:7px;height:38px;background:#0a00ff"></div>
<div class="a" style="left:2430px;top:240px;width:7px;height:38px;background:#4dff4d"></div>
<div class="a" style="left:2430px;top:282px;width:7px;height:38px;background:#ff0000"></div>
<div class="a" style="left:2430px;top:325px;width:7px;height:38px;background:#4d9bff"></div>
<svg style="left:2341px;top:195px" width="537px" height="170" viewBox="2341 195 537 170">
  <defs>
    <g id="eye"><path d="M-12.500 0C-9-5.500-4.500-8 0-8s9 2.500 12.500 8C9 5.500 4.500 8 0 8s-9-2.500-12.500-8z" fill="#d6d6d6"/><circle cx="0" cy="0" r="5.600" fill="#535353"/><circle cx="0" cy="0" r="3.400" fill="#d6d6d6"/><circle cx="-1.300" cy="-1.500" r="1.500" fill="#535353"/></g>
    <path id="chev" d="M0 0l6.500 7.500-6.500 7.500" fill="none" stroke="#d0d0d0" stroke-width="1.800"/>
    <rect id="sq" width="12" height="12" fill="none" stroke="#0c0c0c" stroke-width="2.600"/>
  </defs>
  <use href="#eye" x="2361" y="215.500"/><use href="#eye" x="2361" y="258"/><use href="#eye" x="2361" y="300.500"/><use href="#eye" x="2361" y="343"/>
  <use href="#chev" x="2459.500" y="208.500"/><use href="#chev" x="2459.500" y="251"/><use href="#chev" x="2459.500" y="293.500"/><use href="#chev" x="2459.500" y="336"/>
  <use href="#sq" x="2846" y="210"/><use href="#sq" x="2846" y="252.500"/><use href="#sq" x="2846" y="295"/><use href="#sq" x="2846" y="337.500"/>
  <!-- pen (current drawing layer) -->
  <path d="M2811.500 249.500l8 8-4 4.500-8.500-8zM2805.500 255.500l8 8-4 6.500-11.500 3 6-6a2 2 0 1 0-1.500-1.500l-6 6 3-12z" fill="#cdd9e8"/>
</svg>
<div class="lname" style="top:203px">文章標題</div>
<div class="lname" style="top:245.500px">刊頭</div>
<div class="lname" style="top:288px">主圖</div>
<div class="lname" style="top:330.500px">背景</div>

<!-- layers footer -->
<div class="ln" style="left:2342px;top:769px;width:532px;height:1.500px;background:#5c5c5c"></div>
<div class="a" style="left:2738px;top:770px;width:52px;height:3px;background:#3d3d3d;border-radius:2px"></div>
<div class="t" style="left:2347px;top:780px;font-size:27px;font-weight:700;color:#fff;word-spacing:4px">頁面: 所有頁面， 4 個圖層</div>
<svg style="left:2770px;top:780px" width="25" height="24" viewBox="0 0 25 24"><rect x="1.200" y="1.200" width="22.600" height="21.600" fill="none" stroke="#c6c6c6" stroke-width="2"/><path d="M12.500 7v10M7.500 12h10" stroke="#c6c6c6" stroke-width="2"/></svg>
<svg style="left:2829px;top:779px" width="24" height="25" viewBox="0 0 24 25"><path d="M0 5.500h24M8 5V2.500C8 1.500 9 1 10 1h4c1 0 2 .5 2 1.500V5M3 6v16.500c0 1 .5 1.500 1.500 1.500h15c1 0 1.500-.5 1.500-1.500V6M8 9v11M12 9v11M16 9v11" fill="none" stroke="#c6c6c6" stroke-width="2"/></svg>
<div class="a" style="left:2341px;top:816px;width:537px;height:6px;background:#3c3c3c"></div>

<!-- tab row 2 -->
<div class="tabrow" style="top:822px;height:53px">
  <div class="tab on" style="left:0;width:95px"></div>
  <div class="tab" style="left:95px;width:188px;background:#424242;border-left:2px solid #3a3a3a;border-top:none"></div>
</div>
<div class="tabt on" style="left:2367px;top:838.500px">屬性</div>
<div class="tabt" style="left:2460px;top:837px;font-size:25px;font-weight:400;letter-spacing:.2px">CC Libraries</div>
<div class="a" style="left:2341px;top:875px;width:537px;height:3px;background:#3a3a3a"></div>
<div class="a" style="left:2341px;top:878px;width:537px;height:6px;background:#464646"></div>

<!-- tab row 3 -->
<div class="tabrow" style="top:884px;height:53px">
  <div class="tab" style="left:0;width:144px;background:#424242;border-top:none"></div>
  <div class="tab on" style="left:144px;width:155px"></div>
</div>
<div class="tabt" style="left:2367px;top:902px">字元樣式</div>
<svg style="left:2501px;top:902px" width="13" height="20" viewBox="0 0 13 20"><path d="M1.500 7.500l5-5 5 5M1.500 12.500l5 5 5-5" fill="none" stroke="#c8c8c8" stroke-width="1.800"/></svg>
<div class="tabt on" style="left:2522px;top:902px">段落樣式</div>
<svg style="left:2846px;top:904px" width="20.500" height="15" viewBox="0 0 22 15" preserveAspectRatio="none"><path d="M0 1h22M0 5.300h22M0 9.600h22M0 13.900h22" stroke="#c4c4c4" stroke-width="1.700"/></svg>

<!-- paragraph styles list -->
<div class="t" style="left:2351px;top:951px;font-size:26.200px;font-weight:700;color:#fff;letter-spacing:.3px">[基本段落]</div>
<div class="t" style="left:2776px;top:951px;font-size:25px;color:#bdbdbd;letter-spacing:-1.600px;transform:scaleX(.92);transform-origin:0 0">[a+]</div>
<svg style="left:2840px;top:949px" width="20" height="30" viewBox="0 0 20 30"><path d="M12 0h5.500l-5 12h6.500L4.500 30l4-13.500H2.500z" fill="#bdbdbd"/></svg>
<div class="ln" style="left:2345px;top:988px;width:530px;height:1.500px;background:#5c5c5c"></div>
<div class="t" style="left:2411px;top:996px;font-size:26.200px;font-weight:700;color:#fff;letter-spacing:.3px">[基本段落]</div>
<div class="ln" style="left:2345px;top:1030.500px;width:530px;height:1.500px;background:#5c5c5c"></div>
<div class="ln" style="left:2343.500px;top:940px;width:1px;height:398px;background:#595959"></div>
<div class="ln" style="left:2345px;top:1338px;width:530px;height:1.500px;background:#5c5c5c"></div>

<!-- styles footer icons -->
<svg style="left:2355px;top:1350px" width="29" height="27" viewBox="0 0 29 27"><g fill="none" stroke="#8c8c8c" stroke-width="1.800"><path d="M3 11V1.500h18V6M7 6h20.500v19.500H14"/><path d="M0 19h11"/></g><path d="M9 14l7 5-7 5z" fill="#8c8c8c"/><path d="M17 8h7v8l-3.500-3-3.500 3z" fill="#8c8c8c"/></svg>
<svg style="left:2637px;top:1352px" width="28" height="22" viewBox="0 0 28 22"><path d="M0 0h11v2H0zM0 5h28v17H0z" fill="#c2c2c2"/></svg>
<div class="t" style="left:2690px;top:1350px;font-size:27px;color:#8a8a8a">¶</div>
<svg style="left:2691px;top:1355px" width="36" height="22" viewBox="0 0 36 22"><path d="M22 16l12-13M26 3l1.500 6M34 13l-6-2" stroke="#8a8a8a" stroke-width="1.800" fill="none"/></svg>
<svg style="left:2753px;top:1352px" width="24" height="24" viewBox="0 0 24 24"><rect x="1.200" y="1.200" width="21.600" height="21.600" fill="none" stroke="#d0d0d0" stroke-width="2"/><path d="M12 6.500v11M6.500 12h11" stroke="#d0d0d0" stroke-width="2"/></svg>
<svg style="left:2808px;top:1351px" width="22" height="25" viewBox="0 0 24 25"><path d="M0 5.500h24M8 5V2.500C8 1.500 9 1 10 1h4c1 0 2 .5 2 1.500V5M3 6v16.500c0 1 .5 1.500 1.500 1.500h15c1 0 1.500-.5 1.500-1.500V6M8 9v11M12 9v11M16 9v11" fill="none" stroke="#8a8a8a" stroke-width="2"/></svg>
<div class="a" style="left:2341px;top:1388px;width:537px;height:6px;background:#3c3c3c"></div>

<!-- tab row 4 -->
<div class="tabrow" style="top:1394px;height:53px">
  <div class="tab on" style="left:0;width:107px"></div>
  <div class="tab" style="left:107px;width:96px;background:#464646;border-radius:5px 5px 0 0"></div>
</div>
<svg style="left:2357px;top:1412px" width="13" height="20" viewBox="0 0 13 20"><path d="M1.500 7.500l5-5 5 5M1.500 12.500l5 5 5-5" fill="none" stroke="#c8c8c8" stroke-width="1.800"/></svg>
<div class="tabt on" style="left:2378px;top:1411px">字元</div>
<div class="tabt" style="left:2472px;top:1411px">段落</div>
<svg style="left:2846px;top:1414px" width="20.500" height="15" viewBox="0 0 22 15" preserveAspectRatio="none"><path d="M0 1h22M0 5.300h22M0 9.600h22M0 13.900h22" stroke="#c4c4c4" stroke-width="1.700"/></svg>

<!-- character panel -->
<div class="fld" style="left:2352px;top:1461px;width:516px;height:40px"></div>
<div class="a" style="left:2830px;top:1463px;width:2px;height:36px;background:#6a6a6a"></div>
<svg style="left:2356px;top:1469px" width="36" height="24" viewBox="0 0 36 24"><circle cx="8.500" cy="8.500" r="7" fill="none" stroke="#c8c8c8" stroke-width="2"/><path d="M13.500 13.500l7.500 8.500" stroke="#c8c8c8" stroke-width="2.200"/><path d="M23.500 7l6 6 6-6" fill="none" stroke="#c8c8c8" stroke-width="2"/></svg>
<div class="fldt" style="left:2400px;top:1467.500px;font-size:26.500px;letter-spacing:.75px">Adobe 明體 Std</div>
<div class="fld" style="left:2352px;top:1513px;width:516px;height:40px"></div>
<div class="a" style="left:2830px;top:1515px;width:2px;height:36px;background:#6a6a6a"></div>
<div class="fldt" style="left:2359px;top:1520px">L</div>
<div class="ln" style="left:2352px;top:1563px;width:516px;height:1.500px;background:#5a5a5a"></div>

<div class="fld" style="left:2397px;top:1577px;width:201px;height:40px"></div>
<div class="fld" style="left:2666px;top:1577px;width:202px;height:40px"></div>
<div class="fld" style="left:2397px;top:1629.500px;width:201px;height:40px"></div>
<div class="fld" style="left:2666px;top:1629.500px;width:202px;height:40px"></div>
<svg style="left:2341px;top:1570px" width="537" height="110" viewBox="2341 1570 537 110">
  <g stroke="#6a6a6a" stroke-width="2"><path d="M2430.500 1579v36M2560.500 1579v36M2700.500 1579v36M2830.500 1579v36M2430.500 1631.500v36M2560.500 1631.500v36M2700.500 1631.500v36M2830.500 1631.500v36"/></g>
  <defs>
    <g id="spin"><path d="M-7 4l7-7 7 7M-7 15l7 7 7-7" fill="none" stroke="#dedede" stroke-width="2"/></g>
    <path id="dd" d="M-7.500 -4l7.500 7.500 7.500-7.500" fill="none" stroke="#e2e2e2" stroke-width="2.200"/>
  </defs>
  <use href="#spin" x="2413" y="1587.500"/><use href="#spin" x="2683" y="1587.500"/>
  <use href="#spin" x="2413" y="1640"/><use href="#spin" x="2683" y="1640"/>
  <use href="#dd" x="2578.500" y="1597.500"/><use href="#dd" x="2848.500" y="1597.500"/>
  <use href="#dd" x="2578.500" y="1650"/><use href="#dd" x="2848.500" y="1650"/>
  <use href="#dd" x="2848.500" y="1481.500"/><use href="#dd" x="2848.500" y="1533.500"/>
  <!-- leading icon -->
  <g fill="none" stroke="#c4c4c4" stroke-width="1.700">
    <path d="M2636 1581h19M2636 1598.500h19"/>
    <path d="M2628.500 1584v18"/>
  </g>
  <path d="M2628.500 1581l4 5.500h-8zM2628.500 1605l4-5.500h-8z" fill="#c4c4c4"/>
  <!-- horizontal scale arrows -->
  <path d="M2626 1662.500h26" stroke="#c4c4c4" stroke-width="1.800"/>
  <path d="M2622 1662.500l6-4.500v9zM2656 1662.500l-6-4.500v9z" fill="#c4c4c4"/>
  <!-- vertical scale arrows -->
  <path d="M2357 1639v20" stroke="#c4c4c4" stroke-width="1.800"/>
  <path d="M2357 1634.500l4.500 6h-9zM2357 1663.500l4.500-6h-9z" fill="#c4c4c4"/>
</svg>
<!-- serif T glyph icons -->
<div class="t" style="left:2352px;top:1592px;font-family:'Liberation Serif',serif;font-weight:700;font-size:21px;color:#c4c4c4">T</div>
<div class="t" style="left:2364px;top:1577px;font-family:'Liberation Serif',serif;font-weight:700;font-size:38px;color:#c4c4c4">T</div>
<div class="t" style="left:2364px;top:1629px;font-family:'Liberation Serif',serif;font-weight:700;font-size:38px;color:#c4c4c4">T</div>
<div class="t" style="left:2627px;top:1626px;font-family:'Liberation Serif',serif;font-weight:700;font-size:38px;color:#c4c4c4">T</div>
<div class="t" style="left:2637px;top:1582px;font-size:17px;color:#c4c4c4">A</div>
<div class="t" style="left:2637px;top:1599.500px;font-size:17px;color:#c4c4c4">A</div>
<div class="fldt" style="left:2441px;top:1584px">12 點</div>
<div class="fldt" style="left:2706px;top:1584px;letter-spacing:1.800px">(14.4 點)</div>
<div class="fldt" style="left:2441px;top:1636.500px">100%</div>
<div class="fldt" style="left:2711px;top:1636.500px">100%</div>
<div class="a" style="left:2341px;top:1682px;width:537px;height:2px;background:#3c3c3c"></div>
<div class="a" style="left:2341px;top:1684px;width:537px;height:10px;background:#4c4c4c"></div>
<!-- bottom: edge of the next window peeking in -->
<div class="a" style="left:2px;top:1693px;width:78px;height:7px;background:#535353"></div>
<div class="a" style="left:84px;top:1692.500px;width:2794px;height:8px;background:#4b4b4b"></div>
<div class="a" style="left:2341px;top:1684px;width:537px;height:9px;background:linear-gradient(#474747,#4d4d4d)"></div>
<div class="a" style="left:71px;top:1692.500px;width:2740px;height:20px;border-radius:11px 11px 0 0;background:#4c4c4c;border:1.500px solid #262626"></div>
<div class="a" style="left:72.500px;top:1694px;width:2737px;height:20px;border-radius:10px 10px 0 0;border-top:1px solid #666"></div>
</div>
</body>
</html>
